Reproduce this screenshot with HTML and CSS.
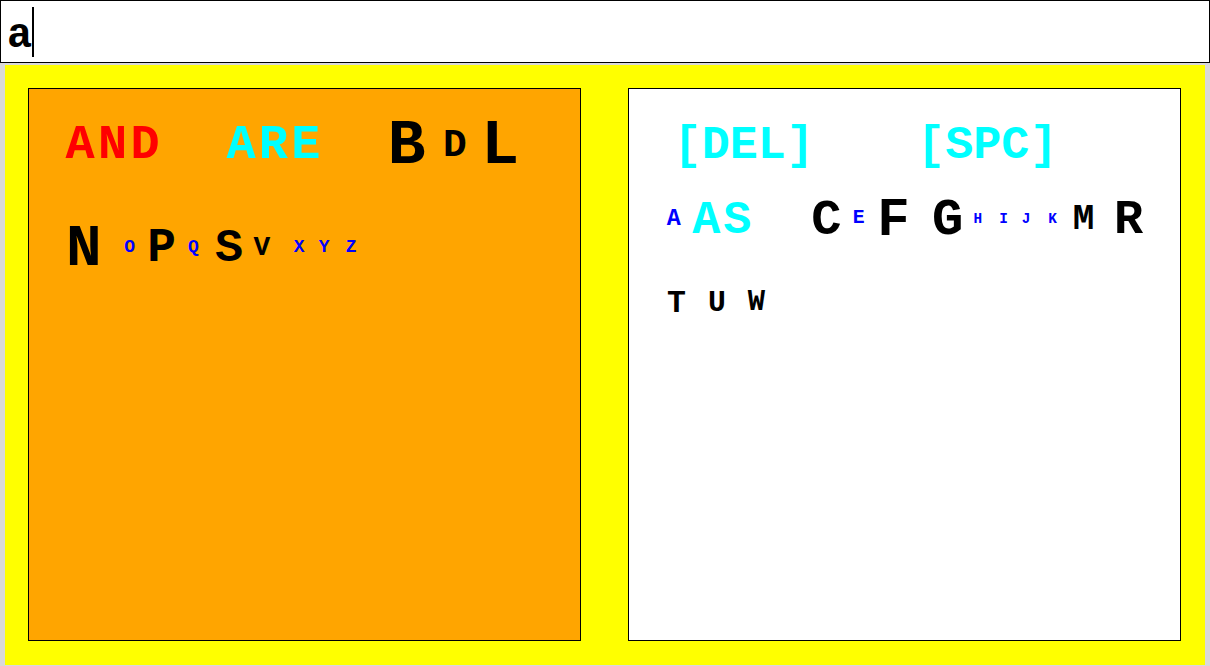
FILE: index.html
```html
<!DOCTYPE html>
<html>
<head>
<meta charset="utf-8">
<link rel="stylesheet" href="styles.css">
</head>
<body>
<div class="entry">
  <span class="typed">a</span><span class="caret"></span>
</div>
<main class="board">
  <section class="panel panel-orange">
    <div class="row">
      <span class="key word s54 red mln2">AND</span>
      <span class="key word s54 cyan ml62">ARE</span>
      <span class="key s70 ml62">B</span>
      <span class="key s44 ml14">D</span>
      <span class="key s70 ml11">L</span>
    </div>
    <div class="row mt43">
      <span class="key s66 mln2">N</span>
      <span class="key s20 blue ml20">O</span>
      <span class="key s53 ml10">P</span>
      <span class="key s20 blue ml10">Q</span>
      <span class="key s52 ml14">S</span>
      <span class="key s31 ml8">V</span>
      <span class="key s20 blue ml22">X</span>
      <span class="key s20 blue ml13">Y</span>
      <span class="key s20 blue ml15">Z</span>
    </div>
  </section>
  <section class="panel panel-white">
    <div class="row">
      <span class="key tag s52 cyan ml6">[DEL]</span>
      <span class="key tag s52 cyan ml100">[SPC]</span>
    </div>
    <div class="row mt15">
      <span class="key s26 blue">A</span>
      <span class="key word s52 cyan ml9">AS</span>
      <span class="key s56 ml55">C</span>
      <span class="key s22 blue ml9">E</span>
      <span class="key s60 ml10">F</span>
      <span class="key s58 ml19">G</span>
      <span class="key s16 blue ml8">H</span>
      <span class="key s16 blue ml16">I</span>
      <span class="key s16 blue ml13">J</span>
      <span class="key s16 blue ml17">K</span>
      <span class="key s40 ml14">M</span>
      <span class="key s54 ml17">R</span>
    </div>
    <div class="row mt24">
      <span class="key s35">T</span>
      <span class="key s33 ml20">U</span>
      <span class="key s32 ml20">W</span>
    </div>
  </section>
</main>
</body>
</html>
```
FILE: styles.css
```css
html, body {
  margin: 0;
  padding: 0;
}
body {
  background: #d9d9d9;
  width: 1210px;
  height: 666px;
  overflow: hidden;
  font-family: "Liberation Mono", "Courier New", monospace;
  font-weight: bold;
}
.entry {
  box-sizing: border-box;
  height: 63px;
  border: 1px solid #000;
  background: #fff;
  display: flex;
  align-items: center;
  padding-left: 6px;
}
.typed {
  font-size: 42px;
  line-height: 1;
  padding-top: 8px;
  color: #000;
}
.caret {
  width: 2px;
  height: 50px;
  background: #000;
}
.board {
  box-sizing: border-box;
  margin: 2px 5px 0;
  height: 600px;
  padding: 23px 24px 24px 23px;
  background: #ffff00;
  display: flex;
  justify-content: space-between;
  align-items: flex-start;
}
.panel {
  box-sizing: border-box;
  width: 553px;
  height: 553px;
  border: 1px solid #000;
  padding: 24px 0 0 37px;
  display: flex;
  flex-direction: column;
}
.panel-orange { background: #ffa500; }
.panel-white { background: #fff; }
.row {
  height: 60px;
  display: flex;
  align-items: center;
  flex-wrap: nowrap;
}
.key {
  --s: 20px;
  display: block;
  font-size: calc(var(--s) * 0.9);
  line-height: 1;
  padding: 0.1264em 0.0333em 0;
  white-space: pre;
  color: #000;
}
.word {
  letter-spacing: 0.0667em;
  padding-right: 0;
}
.tag {
  letter-spacing: 0;
}
.red { color: #ff0000; }
.cyan { color: #00ffff; }
.blue { color: #0000ff; }

.s16 { --s: 16px; }
.s20 { --s: 20px; }
.s22 { --s: 22px; }
.s26 { --s: 26px; }
.s31 { --s: 31px; }
.s32 { --s: 32px; }
.s33 { --s: 33px; }
.s35 { --s: 35px; }
.s40 { --s: 40px; }
.s44 { --s: 44px; }
.s52 { --s: 52px; }
.s53 { --s: 53px; }
.s54 { --s: 54px; }
.s56 { --s: 56px; }
.s58 { --s: 58px; }
.s60 { --s: 60px; }
.s66 { --s: 66px; }
.s70 { --s: 70px; }

.mln2 { margin-left: -2px; }
.ml6 { margin-left: 6px; }
.ml8 { margin-left: 8px; }
.ml9 { margin-left: 9px; }
.ml10 { margin-left: 10px; }
.ml11 { margin-left: 11px; }
.ml13 { margin-left: 13px; }
.ml14 { margin-left: 14px; }
.ml15 { margin-left: 15px; }
.ml16 { margin-left: 16px; }
.ml17 { margin-left: 17px; }
.ml19 { margin-left: 19px; }
.ml20 { margin-left: 20px; }
.ml22 { margin-left: 22px; }
.ml55 { margin-left: 55px; }
.ml62 { margin-left: 62px; }
.ml100 { margin-left: 100px; }

.mt15 { margin-top: 15px; }
.mt24 { margin-top: 24px; }
.mt43 { margin-top: 43px; }
```
